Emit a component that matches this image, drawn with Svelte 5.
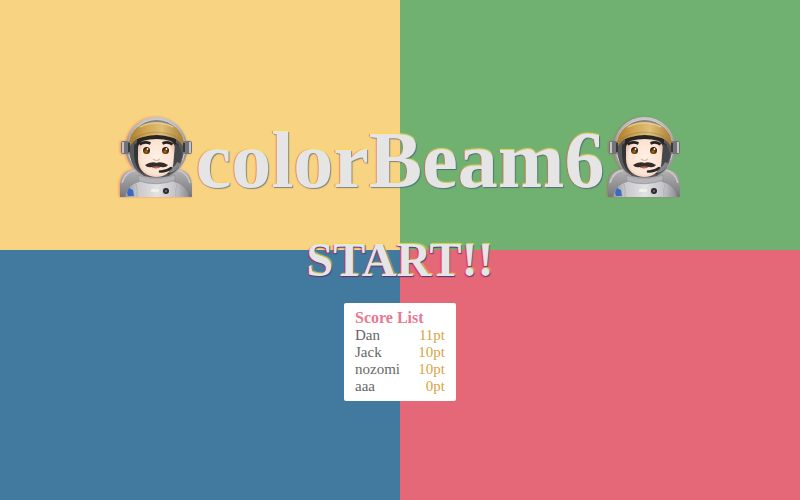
<script>
  const scores = [
    { name: 'Dan', point: 11 },
    { name: 'Jack', point: 10 },
    { name: 'nozomi', point: 10 },
    { name: 'aaa', point: 0 }
  ];
</script>

{#snippet astronaut()}
  <svg class="astronaut" viewBox="0 0 80 80" role="img" aria-label="Astronaut">
    <defs>
      <linearGradient id="suit" x1="0" x2="1">
        <stop offset="0" stop-color="#96969c" /><stop offset=".2" stop-color="#c9c9ce" />
        <stop offset=".5" stop-color="#e2e2e3" /><stop offset=".8" stop-color="#c2c2c8" />
        <stop offset="1" stop-color="#8b8b92" />
      </linearGradient>
      <linearGradient id="pack" x1="0" y1="0" x2="0" y2="1">
        <stop offset="0" stop-color="#b5b5b7" /><stop offset="1" stop-color="#77777b" />
      </linearGradient>
      <linearGradient id="shell" x1="0" y1="0" x2="0" y2="1">
        <stop offset="0" stop-color="#c9c9c9" /><stop offset=".5" stop-color="#929294" />
        <stop offset="1" stop-color="#a9a9ac" />
      </linearGradient>
      <linearGradient id="visor" x1="0" x2="1">
        <stop offset="0" stop-color="#aa7c2c" /><stop offset=".3" stop-color="#cfa552" />
        <stop offset=".6" stop-color="#dfbe78" /><stop offset="1" stop-color="#a97d32" />
      </linearGradient>
      <radialGradient id="skin" cx=".5" cy=".5" r=".62">
        <stop offset="0" stop-color="#fff0e4" /><stop offset=".7" stop-color="#fbe3d3" />
        <stop offset="1" stop-color="#dcae98" />
      </radialGradient>
      <radialGradient id="iris" cx=".45" cy=".65" r=".6">
        <stop offset="0" stop-color="#b87514" /><stop offset=".55" stop-color="#603007" />
        <stop offset="1" stop-color="#241004" />
      </radialGradient>
    </defs>
    <path d="M4 80V68Q5 53 20 52H61Q75 53 76 68V80Z" fill="url(#pack)" />
    <path d="M6 66Q9 54 21 53M74 66Q71 54 60 53" fill="none" stroke="#c9c9cb" stroke-width="1.500" />
    <path d="M9 80Q11 68 23 65L29 60H53L58 65Q71 68 73 80Z" fill="url(#suit)" />
    <path d="M20 67Q22 73 21 80M61 67Q59 73 60 80" stroke="#b0b0b6" fill="none" />
    <path d="M22 58Q40 65 59 58V63Q41 70 23 64Z" fill="#b4b4b8" stroke="#929297" stroke-width=".7" />
    <path d="M13 71L17 73 18 79H12L11 75Z" fill="#3a69c4" />
    <rect x="35" y="72" width="8" height="3" rx="1" fill="#f0f0f1" />
    <rect x="46" y="70" width="8" height="8" rx="1" fill="#d0d0d4" />
    <circle cx="50" cy="74" r="3" fill="#29292d" />
    <circle cx="50" cy="74" r="1.200" fill="#67676b" />
    <circle cx="40.500" cy="31" r="31" fill="url(#shell)" />
    <circle cx="40.500" cy="31" r="28.500" fill="#858587" stroke="#d2d2d3" stroke-width="1" />
    <path d="M14 28Q15 9 40.500 8Q66 9 67 28V38Q65 53 53 59Q41 62 28 59Q16 53 14 38Z" fill="#59595a" />
    <path d="M18 28Q25 20 40 19Q57 20 63 28V39Q62 52 53 57H28Q19 52 18 39Z" fill="#343435" />
    <path d="M22 30Q23 21 41 21Q58 21 59 30V42Q58 51 52 56Q47 60 40.500 60Q34 60 28 56Q22 51 22 42Z" fill="url(#skin)" />
    <path d="M21 31V22Q40 14 60 22V31Q58 26 55 24Q41 20 26 24Q23 26 21 31Z" fill="#282624" />
    <path d="M13 25Q16 6 40.500 5Q65 6 68 25L67 29Q62 21 54 20Q41 16 27 20Q19 21 14 29Z" fill="url(#visor)" />
    <path d="M15 25Q22 16 40 15Q59 16 66 25" fill="none" stroke="#8f692e" stroke-width="1.200" opacity=".35" />
    <path d="M24 10Q40 2 57 10" fill="none" stroke="#ecd08f" stroke-width="1.500" opacity=".7" />
    <path d="M23.500 27.500Q28 24 34.500 26.500M46.500 26.500Q52 24 56.500 27.500" fill="none" stroke="#26231f" stroke-width="2.800" />
    <ellipse cx="30.500" cy="33.500" rx="4.600" ry="3.700" fill="#fff9f1" />
    <ellipse cx="49.500" cy="33.500" rx="4.600" ry="3.700" fill="#fff9f1" />
    <circle cx="30.500" cy="33.500" r="3.500" fill="url(#iris)" />
    <circle cx="49.500" cy="33.500" r="3.500" fill="url(#iris)" />
    <circle cx="31.500" cy="32" r=".9" fill="#fff" />
    <circle cx="50.500" cy="32" r=".9" fill="#fff" />
    <path d="M37 42Q40.500 45 44 42" fill="none" stroke="#dfb7a2" stroke-width="1.200" />
    <path d="M34 49H46Q40 54 34 49Z" fill="#b9675b" />
    <path d="M29 48Q31 47 33 46Q38 44.500 40.500 46Q43 44.500 48 46Q50 47 52 48Q50 51 45 50Q40.500 48.500 36 50Q31 51 29 48Z" fill="#352d2a" />
    <path d="M59 27Q66 29 66 39Q64 48 57 51Z" fill="#454648" />
    <path d="M63 46Q59 53 53 54" fill="none" stroke="#858689" stroke-width="4" />
    <path d="M44 54.500Q50 55 55 51" fill="none" stroke="#29292b" stroke-width="2.500" stroke-linecap="round" />
    <rect x="5" y="24" width="9" height="13" rx="2" fill="#737479" />
    <rect x="67" y="24" width="9" height="13" rx="2" fill="#737479" />
    <path d="M7 25V36M74 25V36" stroke="#c5c5c7" stroke-width="2" />
    <path d="M13 26V35M68 26V35" stroke="#38393c" stroke-width="2" />
  </svg>
{/snippet}

<main>
  <div class="tiles" aria-hidden="true">
    <span class="yellow"></span><span class="green"></span>
    <span class="blue"></span><span class="red"></span>
  </div>
  <div class="content">
    <h1>{@render astronaut()}<span>colorBeam6</span>{@render astronaut()}</h1>
    <button type="button">START!!</button>
    <table>
      <thead><tr><th colspan="2">Score List</th></tr></thead>
      <tbody>
        {#each scores as score}
          <tr><td>{score.name}</td><td class="point">{score.point}pt</td></tr>
        {/each}
      </tbody>
    </table>
  </div>
</main>

<style>
  :global(body) { margin: 0; }
  main {
    position: relative;
    min-height: 100vh;
    font-family: "Liberation Serif", "Times New Roman", serif;
  }
  .tiles {
    position: absolute;
    inset: 0;
    display: grid;
    grid-template: 1fr 1fr / 1fr 1fr;
  }
  .yellow { background: #f8d381; }
  .green { background: #70b172; }
  .blue { background: #427a9f; }
  .red { background: #e56878; }
  .content {
    position: relative;
    display: flex;
    flex-direction: column;
    align-items: center;
    padding-top: 112px;
  }
  h1, button {
    color: #e5e5e5;
    font-weight: bold;
  }
  h1 {
    display: flex;
    align-items: flex-start;
    margin: 0;
    font-size: 80px;
    line-height: 96px;
    text-shadow: 1px 1px 1px #34508099, -1px 0 1px #e0405080, 0 -1px 1px #ffe83ccc;
  }
  .astronaut {
    width: 80px;
    height: 80px;
    margin-top: 5px;
    filter: drop-shadow(-1px 0 1px #e5304866);
  }
  button {
    margin: 24px 0 15px;
    padding: 0;
    border: 0;
    background: none;
    font-family: inherit;
    font-size: 48px;
    line-height: 56px;
    text-shadow: 1px 1px 1px #283c8ccc, -1px 1px 1px #e02040cc, 1px -1px 1px #f0dc3ccc;
    cursor: pointer;
  }
  table {
    width: 112px;
    padding: 6px 11px;
    border-spacing: 0;
    border-radius: 2px;
    background: #fff;
    font-size: 15px;
    line-height: 17px;
    color: #666;
  }
  th, td { padding: 0; text-align: left; }
  th { font-size: 16px; line-height: 18px; color: #e87891; }
  td.point { color: #d9a441; text-align: right; }
</style>
